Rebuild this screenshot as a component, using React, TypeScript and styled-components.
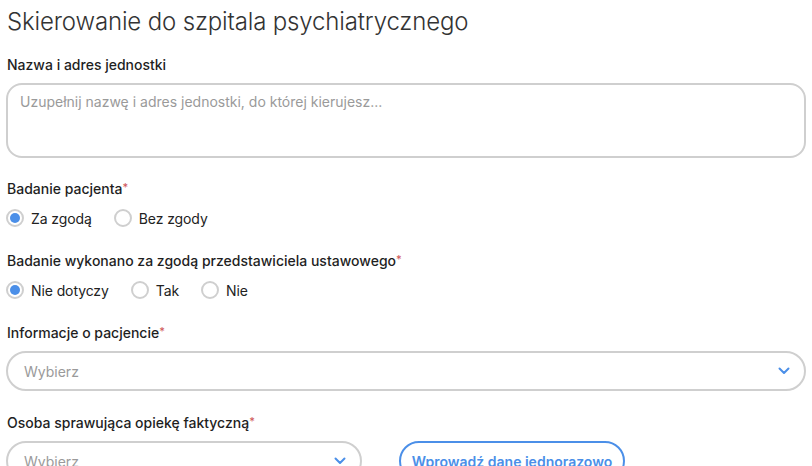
import React from "react";
import styled, { createGlobalStyle } from "styled-components";

const Global = createGlobalStyle`
  html, body { margin: 0; padding: 0; background: #fff; }
  body { font-family: Inter, "Open Sans", sans-serif; color: #222; }
  * { box-sizing: border-box; }
`;

const Page = styled.div`
  padding: 7px 6px 0 6px;
  display: flex;
  flex-direction: column;
`;

const Title = styled.h1`
  margin: 0 0 18px 1px;
  font-size: 24px;
  line-height: 30px;
  font-weight: 300;
  color: #333;
  letter-spacing: -0.15px;
`;

const Field = styled.div<{ $gap?: number; $mb?: number }>`
  display: flex;
  flex-direction: column;
  gap: ${(p) => p.$gap ?? 8}px;
  margin-bottom: ${(p) => p.$mb ?? 22}px;
`;

const Label = styled.div`
  font-size: 14px;
  line-height: 20px;
  font-weight: 500;
  color: #1f1f1f;
  padding-left: 1px;
`;

const Req = styled.span`
  color: #d0585a;
  font-size: 11px;
  vertical-align: top;
  line-height: 16px;
`;

const TextArea = styled.textarea`
  width: 100%;
  height: 75px;
  border: 2px solid #cfcfcf;
  border-radius: 16px;
  padding: 8px 12px;
  font-family: inherit;
  font-size: 14px;
  line-height: 18px;
  resize: none;
  outline: none;
  &::placeholder { color: #9a9a9a; }
`;

const RadioRow = styled.div`
  display: flex;
  align-items: center;
  gap: 22px;
  height: 20px;
`;

const RadioItem = styled.label`
  display: flex;
  align-items: center;
  gap: 7px;
  font-size: 14px;
  color: #222;
  letter-spacing: -0.1px;
`;

const Circle = styled.span<{ $on?: boolean }>`
  width: 18px;
  height: 18px;
  border-radius: 50%;
  border: 2px solid #cfcfcf;
  display: flex;
  align-items: center;
  justify-content: center;
  &::after {
    content: "";
    width: 10px;
    height: 10px;
    border-radius: 50%;
    background: ${(p) => (p.$on ? "#4b8fe8" : "transparent")};
  }
`;

const Select = styled.div<{ $w?: number }>`
  width: ${(p) => (p.$w ? `${p.$w}px` : "100%")};
  height: 40px;
  border: 2px solid #cfcfcf;
  border-radius: 20px;
  display: flex;
  align-items: center;
  justify-content: space-between;
  padding: 0 14px 0 16px;
  font-size: 14px;
  color: #9a9a9a;
  flex-shrink: 0;
`;

const Row = styled.div`
  display: flex;
  align-items: center;
  gap: 37px;
`;

const Button = styled.button`
  width: 226px;
  height: 40px;
  border: 2px solid #4b8fe8;
  border-radius: 20px;
  background: #fff;
  color: #4b8fe8;
  font-family: inherit;
  font-size: 14px;
  font-weight: 600;
`;

const Chevron = () => (
  <svg width="12" height="8" viewBox="0 0 12 8">
    <path d="M1.5 1.5 L6 6 L10.5 1.5" fill="none" stroke="#4b8fe8" strokeWidth="2" strokeLinecap="round" strokeLinejoin="round" />
  </svg>
);

const Radio = ({ on, children }: { on?: boolean; children: React.ReactNode }) => (
  <RadioItem>
    <Circle $on={on} />
    {children}
  </RadioItem>
);

export default function App() {
  return (
    <>
      <Global />
      <Page>
        <Title>Skierowanie do szpitala psychiatrycznego</Title>
        <Field $mb={21}>
          <Label>Nazwa i adres jednostki</Label>
          <TextArea placeholder="Uzupełnij nazwę i adres jednostki, do której kierujesz..." />
        </Field>
        <Field $gap={9} $mb={23}>
          <Label>Badanie pacjenta<Req>*</Req></Label>
          <RadioRow>
            <Radio on>Za zgodą</Radio>
            <Radio>Bez zgody</Radio>
          </RadioRow>
        </Field>
        <Field $gap={9} $mb={23}>
          <Label>Badanie wykonano za zgodą przedstawiciela ustawowego<Req>*</Req></Label>
          <RadioRow>
            <Radio on>Nie dotyczy</Radio>
            <Radio>Tak</Radio>
            <Radio>Nie</Radio>
          </RadioRow>
        </Field>
        <Field>
          <Label>Informacje o pacjencie<Req>*</Req></Label>
          <Select>
            Wybierz
            <Chevron />
          </Select>
        </Field>
        <Field>
          <Label>Osoba sprawująca opiekę faktyczną<Req>*</Req></Label>
          <Row>
            <Select $w={356}>
              Wybierz
              <Chevron />
            </Select>
            <Button>Wprowadź dane jednorazowo</Button>
          </Row>
        </Field>
      </Page>
    </>
  );
}
